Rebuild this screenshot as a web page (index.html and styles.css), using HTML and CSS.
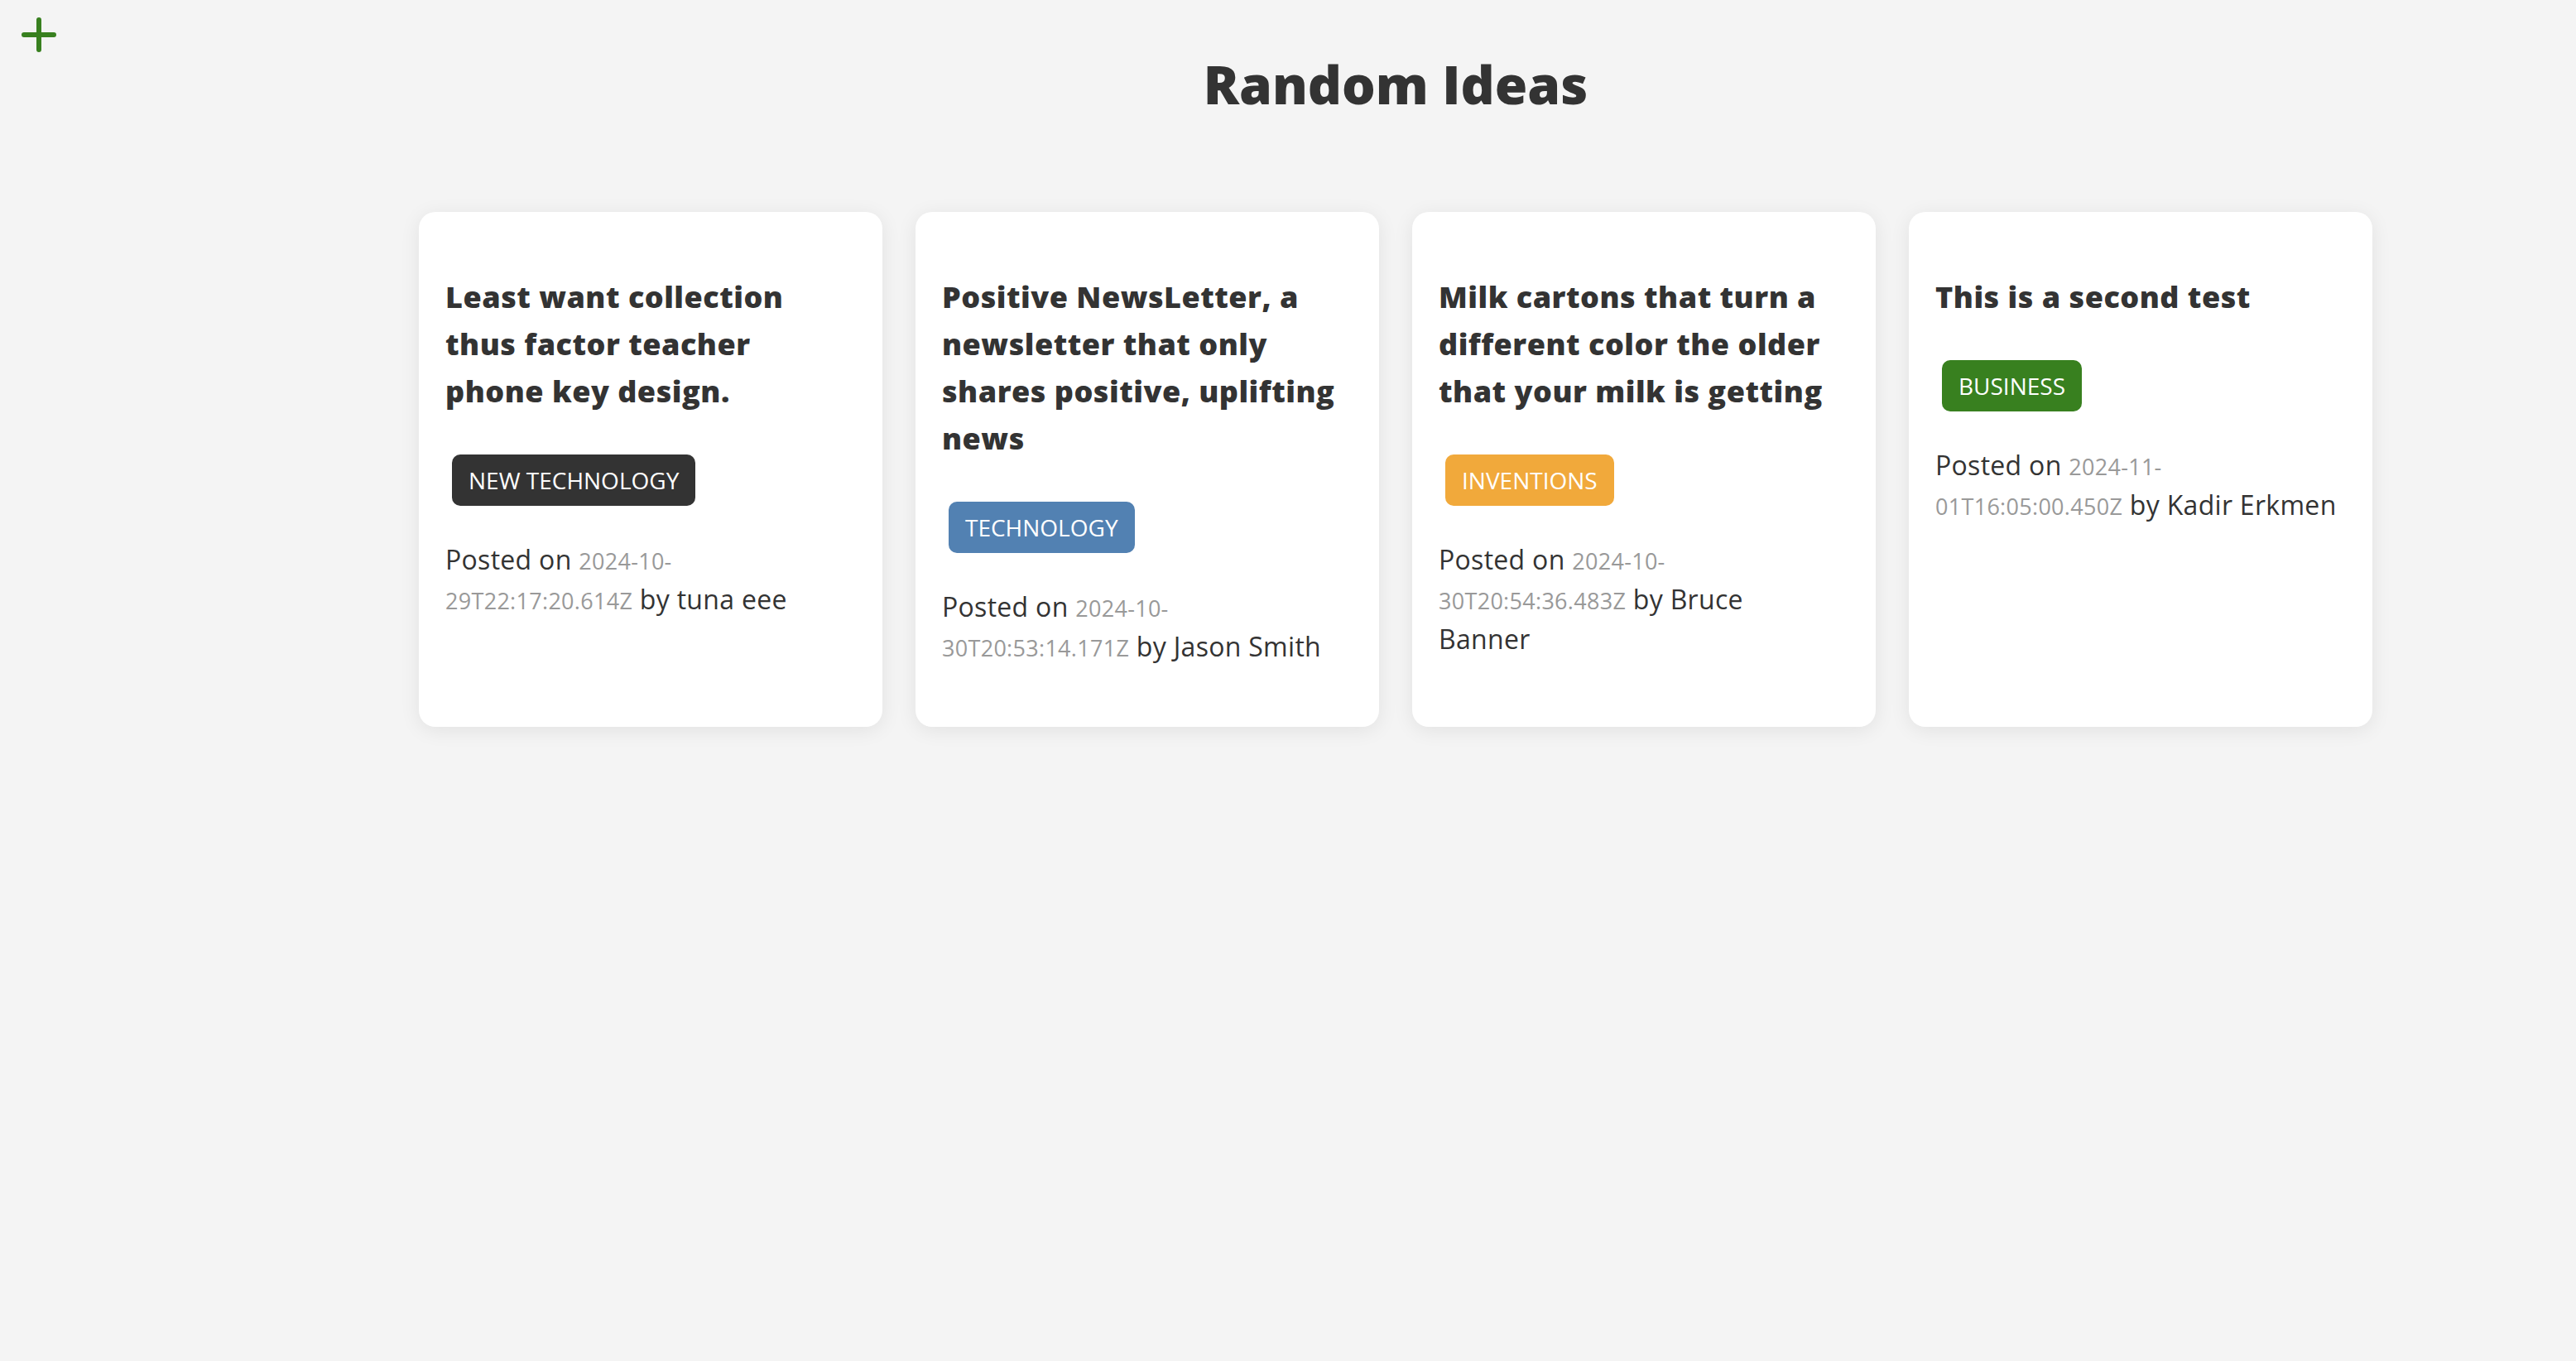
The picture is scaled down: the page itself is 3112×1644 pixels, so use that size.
FILE: index.html
```html
<!DOCTYPE html>
<html lang="en">
<head>
<meta charset="utf-8">
<title>Random Ideas</title>
<link rel="stylesheet" href="styles.css">
</head>
<body>
<div class="page">
  <aside class="side">
    <button class="add-btn" aria-label="Add idea">
      <svg width="48" height="48" viewBox="0 0 48 48"><path d="M6 24H42M24 6V42" fill="none" stroke="#38801f" stroke-width="6" stroke-linecap="round"/></svg>
    </button>
  </aside>
  <main class="main">
    <h1 class="heading">Random Ideas</h1>
    <section class="ideas">
      <article class="card">
        <h3 class="card-title">Least want collection thus factor teacher phone key design.</h3>
        <span class="tag tag-dark">NEW TECHNOLOGY</span>
        <p class="meta">Posted on <span class="date">2024-10-<br>29T22:17:20.614Z</span> by tuna eee</p>
      </article>
      <article class="card">
        <h3 class="card-title">Positive NewsLetter, a newsletter that only shares positive, uplifting news</h3>
        <span class="tag tag-blue">TECHNOLOGY</span>
        <p class="meta">Posted on <span class="date">2024-10-<br>30T20:53:14.171Z</span> by Jason Smith</p>
      </article>
      <article class="card">
        <h3 class="card-title">Milk cartons that turn a different color the older that your milk is getting</h3>
        <span class="tag tag-orange">INVENTIONS</span>
        <p class="meta">Posted on <span class="date">2024-10-<br>30T20:54:36.483Z</span> by Bruce<br>Banner</p>
      </article>
      <article class="card">
        <h3 class="card-title">This is a second test</h3>
        <span class="tag tag-green">BUSINESS</span>
        <p class="meta">Posted on <span class="date">2024-11-<br>01T16:05:00.450Z</span> by Kadir Erkmen</p>
      </article>
    </section>
  </main>
</div>
</body>
</html>
```

FILE: styles.css
```css
* { box-sizing: border-box; }
body {
  margin: 0;
  background: #f4f4f4;
  color: #333;
  font-family: "Open Sans", "Liberation Sans", sans-serif;
  min-height: 100vh;
}
.page { display: flex; align-items: flex-start; }
.side { width: 260px; flex: none; padding: 18px 0 0 23px; }
.add-btn {
  display: block; width: 48px; height: 48px; padding: 0; margin: 0;
  border: 0; background: none; cursor: pointer;
}
.add-btn svg { display: block; }
.main { flex: 1; min-width: 0; }
.heading {
  margin: 64px 0 116px;
  text-align: center;
  font-size: 64px;
  line-height: 76px;
  font-weight: 800;
}
.ideas {
  display: grid;
  grid-template-columns: repeat(4, 560px);
  gap: 40px;
  justify-content: center;
}
.card {
  display: flex; flex-direction: column; align-items: flex-start;
  background: #fff;
  border-radius: 20px;
  box-shadow: 0 4px 24px rgba(0,0,0,0.08);
  padding: 32px;
}
.card-title {
  margin: 42px 0 0;
  font-size: 36px;
  line-height: 57px;
  font-weight: 800;
  letter-spacing: 0.5px;
}
.tag {
  margin: 48px 0 0 8px;
  height: 62px;
  line-height: 62px;
  padding: 0 20px;
  border-radius: 10px;
  color: #fff;
  font-size: 28px;
}
.tag-dark { background: #333; }
.tag-blue { background: #5281b2; }
.tag-orange { background: #f1a93b; }
.tag-green { background: #38801f; }
.meta {
  margin: 42px 0 40px;
  font-size: 32px;
  line-height: 46px;
  letter-spacing: 0.3px;
}
.date { font-size: 27px; color: #999; }
```
